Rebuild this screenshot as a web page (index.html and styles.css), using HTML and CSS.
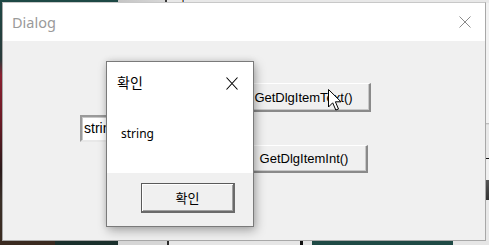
FILE: index.html
```html
<!DOCTYPE html>
<html lang="ko">
<head>
<meta charset="utf-8">
<title>Dialog</title>
<link rel="stylesheet" href="styles.css">
</head>
<body>
<div class="desktop">
  <div class="window">
    <div class="titlebar">
      <span class="title">Dialog</span>
      <svg class="close" width="12" height="12" viewBox="0 0 12 12"><path d="M0.5 0.5 L11.5 11.5 M11.5 0.5 L0.5 11.5" stroke="#8a8a8a" stroke-width="1" fill="none"/></svg>
    </div>
    <div class="client">
      <div class="edit"><span>string</span></div>
      <div class="buttons">
        <div class="btn btn1">GetDlgItemText()</div>
        <div class="btn btn2">GetDlgItemInt()</div>
      </div>
    </div>
  </div>

  <div class="msgbox">
    <div class="msg-top">
      <div class="msg-title">
        <span>확인</span>
        <svg class="msg-close" width="12" height="13" viewBox="0 0 12 13"><path d="M0.5 0.5 L11.5 12.5 M11.5 0.5 L0.5 12.5" stroke="#000" stroke-width="1.1" fill="none"/></svg>
      </div>
      <div class="msg-text">string</div>
    </div>
    <div class="msg-foot">
      <div class="okbtn"><span>확인</span></div>
    </div>
  </div>

  <svg class="cursor" width="15" height="23" viewBox="0 0 15 23"><path d="M0.5 0.5 L0.5 18 L4.7 13.8 L7.8 21 L10.5 20 L7.4 12.8 L13 12.8 Z" fill="#fff" stroke="#000" stroke-width="1" stroke-linejoin="miter"/></svg>
</div>
</body>
</html>
```

FILE: styles.css
```css
html, body {
  margin: 0;
  padding: 0;
}

body {
  width: 489px;
  height: 245px;
  overflow: hidden;
}

.desktop {
  position: relative;
  width: 489px;
  height: 245px;
  padding: 2px 0 0 2px;
  box-sizing: border-box;
  background:
    linear-gradient(to right, #1d4845 0, #1d4845 118px, #c4c4c4 118px, #d8d8d8 165px, #3a3a3a 165px, #3a3a3a 167px, #e8e8e8 167px, #e8e8e8 182px, #d08a30 182px, #d08a30 183px, #3a6fc0 183px, #3a6fc0 184px, #e8e8e8 184px, #e8e8e8 100%) top left / 100% 3px no-repeat,
    linear-gradient(to right, #3a2a20 0, #3a2a20 55px, #1a302c 55px, #1a302c 118px, #d6d6d6 118px, #d6d6d6 167px, #2a2a2a 167px, #2a2a2a 169px, #e6e6e6 169px, #e6e6e6 300px, #111 300px, #111 303px, #e6e6e6 303px, #e6e6e6 312px, #1f4a45 312px, #1f4a45 453px, #e6e6e6 453px) bottom left / 100% 4px no-repeat,
    linear-gradient(to bottom, #f2f2f2 0, #f2f2f2 123px, #b0b0b0 123px, #e8e8e8 125px, #e8e8e8 158px, #111 158px, #111 159px, #f0f0f0 159px, #f0f0f0 180px, #555 180px, #333 200px, #e8e8e8 200px) top right / 4px 100% no-repeat,
    linear-gradient(to bottom, #1d4845 0, #2a3a3a 60px, #8a2030 75px, #6a1a25 120px, #2a1a1a 170px, #3a3028 200px, #3a2a20 245px) top left / 2px 100% no-repeat,
    #e6e6e6;
}

.window {
  width: 484px;
  height: 239px;
  box-sizing: border-box;
  border: 1px solid #a8a8a8;
  border-top-color: #c8c8c8;
  background: #f0f0f0;
  display: flex;
  flex-direction: column;
}

.titlebar {
  height: 38px;
  flex: none;
  background: #fff;
  display: flex;
  align-items: center;
  justify-content: space-between;
  padding: 0 14px 0 9px;
}

.title {
  font-family: "Noto Sans", "Open Sans", sans-serif;
  font-size: 14.5px;
  color: #9a9a9a;
  margin-top: -1px;
}

.close {
  display: block;
}

.client {
  flex: 1;
  display: flex;
  align-items: flex-start;
  padding: 42px 0 0 77px;
}

.edit {
  margin-top: 32px;
  width: 159px;
  height: 27px;
  box-sizing: border-box;
  background: #fff;
  border-style: solid;
  border-width: 2px;
  border-color: #9a9a9a #e8e8e8 #e8e8e8 #9a9a9a;
  box-shadow: inset 1px 1px 0 #c8c8c8;
  font-family: "Liberation Sans", Arial, sans-serif;
  font-size: 14px;
  color: #000;
  padding: 3px 0 0 2px;
}

.buttons {
  display: flex;
  flex-direction: column;
  align-items: flex-start;
}

.btn {
  box-sizing: border-box;
  background: #f0f0f0;
  border-style: solid;
  border-width: 1px 2px 2px 1px;
  border-color: #fff #8a8a8a #8a8a8a #fff;
  box-shadow: inset -1px -1px 0 #c8c8c8;
  font-family: "Liberation Sans", Arial, sans-serif;
  font-size: 13px;
  color: #000;
  display: flex;
  align-items: center;
  justify-content: center;
}

.btn1 {
  width: 132px;
  height: 29px;
  padding-right: 2px;
}

.btn2 {
  width: 127px;
  height: 28px;
  margin-left: 2px;
  margin-top: 33px;
}

.msgbox {
  position: absolute;
  left: 106px;
  top: 61px;
  width: 148px;
  height: 166px;
  box-sizing: border-box;
  border: 1px solid #7a7a7a;
  background: #f0f0f0;
  box-shadow: 2px 4px 10px rgba(0, 0, 0, 0.28), 0 0 6px rgba(0, 0, 0, 0.12);
  display: flex;
  flex-direction: column;
}

.msg-top {
  height: 111px;
  background: #fff;
  flex: none;
}

.msg-title {
  display: flex;
  align-items: center;
  justify-content: space-between;
  padding: 7px 15px 0 10px;
  height: 26px;
  font-family: "Noto Sans CJK KR", sans-serif;
  font-size: 14px;
  color: #000;
}

.msg-close {
  display: block;
  margin-top: 2px;
}

.msg-text {
  margin: 30px 0 0 14px;
  font-family: "Noto Sans", "Open Sans", sans-serif;
  font-size: 12px;
  color: #000;
}

.msg-foot {
  flex: 1;
  padding: 10px 0 0 34px;
}

.okbtn {
  width: 94px;
  height: 30px;
  box-sizing: border-box;
  border: 1px solid #5a5a5a;
  border-right-width: 2px;
  border-bottom-width: 2px;
  border-right-color: #6a6a6a;
  border-bottom-color: #6a6a6a;
  box-shadow: inset 1px 1px 0 #fff, inset -1px -1px 0 #a0a0a0;
  background: #f0f0f0;
  display: flex;
  align-items: center;
  justify-content: center;
  font-family: "Noto Sans CJK KR", sans-serif;
  font-size: 13px;
  color: #000;
}

.cursor {
  position: absolute;
  left: 328px;
  top: 89px;
}
```
